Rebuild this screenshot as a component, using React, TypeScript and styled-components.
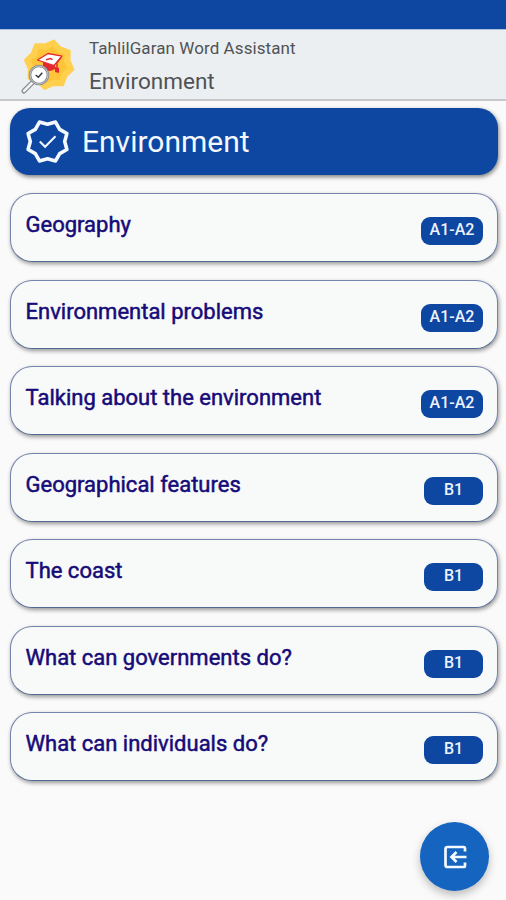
import React from "react";
import styled, { createGlobalStyle } from "styled-components";

const GlobalStyle = createGlobalStyle`
  * { box-sizing: border-box; }
  body {
    margin: 0;
    background: #fafafa;
    font-family: Roboto, "Liberation Sans", sans-serif;
  }
`;

const Screen = styled.div`
  width: 506px;
  height: 900px;
  display: flex;
  flex-direction: column;
  overflow: hidden;
  background: #fafafa;
`;

const StatusBar = styled.div`
  flex: none;
  height: 30px;
  background: #0d47a1;
  border-bottom: 1px solid #a9c1de;
`;

const AppBar = styled.header`
  flex: none;
  height: 71px;
  display: flex;
  padding-left: 20px;
  background: #eceff1;
  border-bottom: 2px solid #c6c8cb;
`;

const AppLogo = styled.svg`
  width: 60px;
  height: 66px;
  flex: none;
`;

const Titles = styled.div`
  display: flex;
  flex-direction: column;
  padding: 7px 0 0 9px;
  color: #505355;
  white-space: nowrap;
`;

const AppName = styled.div`
  font-size: 17px;
  line-height: 22px;
  letter-spacing: 0.08px;
`;

const PageName = styled.div`
  margin-top: 8px;
  font-size: 22.5px;
  line-height: 28px;
`;

const Content = styled.main`
  flex: 1;
  display: flex;
  flex-direction: column;
  padding: 7px 8px 0 10px;
`;

const Banner = styled.section`
  flex: none;
  height: 67px;
  display: flex;
  align-items: center;
  gap: 12px;
  padding-left: 15px;
  border-radius: 20px;
  background: #0d47a1;
  box-shadow: 1px 2px 4px rgba(0, 0, 0, 0.5);
  color: #f4f8ff;
`;

const BannerIcon = styled.svg`
  width: 45px;
  height: 45px;
`;

const BannerTitle = styled.h1`
  margin: 0;
  font-size: 30px;
  font-weight: 400;
  line-height: 36px;
`;

const Lessons = styled.div`
  display: flex;
  flex-direction: column;
  gap: 17.5px;
  margin-top: 18px;
`;

const Card = styled.article`
  height: 69px;
  display: flex;
  justify-content: space-between;
  align-items: flex-start;
  padding: 15px 14px 0 14.5px;
  border: 1px solid #7684ac;
  border-bottom-color: #526a91;
  border-radius: 22px;
  background: #f8f9f9;
  box-shadow: 1px 2px 4px rgba(0, 0, 0, 0.4);
`;

const LessonName = styled.div`
  font-size: 22px;
  line-height: 32px;
  color: #160b78;
  -webkit-text-stroke: 0.5px #160b78;
`;

const Level = styled.div<{ $wide: boolean }>`
  width: ${(p) => (p.$wide ? 62 : 59)}px;
  height: 28px;
  margin-top: 8px;
  border-radius: 9px;
  background: #0d47a1;
  color: #edf2fd;
  font-size: 16px;
  font-weight: 500;
  line-height: 25px;
  text-align: center;
`;

const ExitButton = styled.button`
  position: absolute;
  left: 420px;
  top: 822px;
  width: 69px;
  height: 69px;
  display: flex;
  align-items: center;
  justify-content: center;
  padding: 0;
  border: 0;
  border-radius: 50%;
  background: #1565c0;
  box-shadow: 0 4px 8px rgba(0, 0, 0, 0.25);
`;

const lessons = [
  { name: "Geography", level: "A1-A2" },
  { name: "Environmental problems", level: "A1-A2" },
  { name: "Talking about the environment", level: "A1-A2" },
  { name: "Geographical features", level: "B1" },
  { name: "The coast", level: "B1" },
  { name: "What can governments do?", level: "B1" },
  { name: "What can individuals do?", level: "B1" },
];

function star(cx: number, cy: number, outer: number, inner: number, offset: number) {
  return Array.from({ length: 16 }, (_, i) => {
    const a = ((offset + i * 22.5) * Math.PI) / 180;
    const r = i % 2 ? inner : outer;
    return `${(cx + r * Math.cos(a)).toFixed(2)},${(cy + r * Math.sin(a)).toFixed(2)}`;
  }).join(" ");
}

function Logo() {
  return (
    <AppLogo viewBox="20 30 60 66">
      <polygon points={star(49.2, 64.7, 25, 21, 11)} fill="#ffd04e" stroke="#ffd04e" strokeWidth="1.5" strokeLinejoin="round" />
      <polygon points={star(49.2, 64.7, 19, 15, 11)} fill="#ffc439" />
      <path d="M43 62v7q6 4 12 0v-7" fill="#e52a2d" />
      <path d="M37.5 60l10.5-6.5 14 2.7-8 9.3z" fill="#fff" stroke="#e52a2d" strokeWidth="1.3" strokeLinejoin="round" />
      <path d="M46 59.8l4.5-1.2 2 1" fill="none" stroke="#e52a2d" strokeWidth="1.5" />
      <path d="M61 57.5l-4 5v9" fill="none" stroke="#e52a2d" strokeWidth="1.5" />
      <path d="M55 67l4 1v5l-4-1z" fill="#e52a2d" />
      <path d="M33.2 81.8l-9.3 9.3" stroke="#898d91" strokeWidth="5" strokeLinecap="round" />
      <path d="M32.6 82.4l-8.5 8.5" stroke="#f2f3f4" strokeWidth="2.7" strokeLinecap="round" />
      <circle cx="39" cy="75" r="9" fill="#fff" stroke="#8a8e91" strokeWidth="2.7" />
      <circle cx="39" cy="75" r="9" fill="none" stroke="#c9cccf" strokeWidth="0.8" />
      <path d="M35.7 75l2.6 2.3 4-4.6" fill="none" stroke="#34383b" strokeWidth="1.5" />
    </AppLogo>
  );
}

export default function App() {
  return (
    <Screen>
      <GlobalStyle />
      <StatusBar />
      <AppBar>
        <Logo />
        <Titles>
          <AppName>TahlilGaran Word Assistant</AppName>
          <PageName>Environment</PageName>
        </Titles>
      </AppBar>
      <Content>
        <Banner>
          <BannerIcon viewBox="0 0 45 45" fill="none" stroke="#f4f8ff">
            <polygon points={star(22.5, 22.5, 21, 17.2, 22.5)} strokeWidth="3.6" strokeLinejoin="round" />
            <path d="M14.8 22.5l5.3 5.3L30.5 17.3" strokeWidth="2" />
          </BannerIcon>
          <BannerTitle>Environment</BannerTitle>
        </Banner>
        <Lessons>
          {lessons.map((l) => (
            <Card key={l.name}>
              <LessonName>{l.name}</LessonName>
              <Level $wide={l.level.length > 2}>{l.level}</Level>
            </Card>
          ))}
        </Lessons>
      </Content>
      <ExitButton aria-label="Exit">
        <svg width="26" height="26" viewBox="0 0 26 26" fill="none" stroke="#f4f8ff" strokeWidth="2.7">
          <path d="M23 7.5V4.5Q23 3 21.5 3H5.5Q3.5 3 3.5 5V21Q3.5 23 5.5 23H21.5Q23 23 23 21.5V18.5" />
          <path d="M24.5 13H9.5M14.5 8L9.5 13l5 5" />
        </svg>
      </ExitButton>
    </Screen>
  );
}
